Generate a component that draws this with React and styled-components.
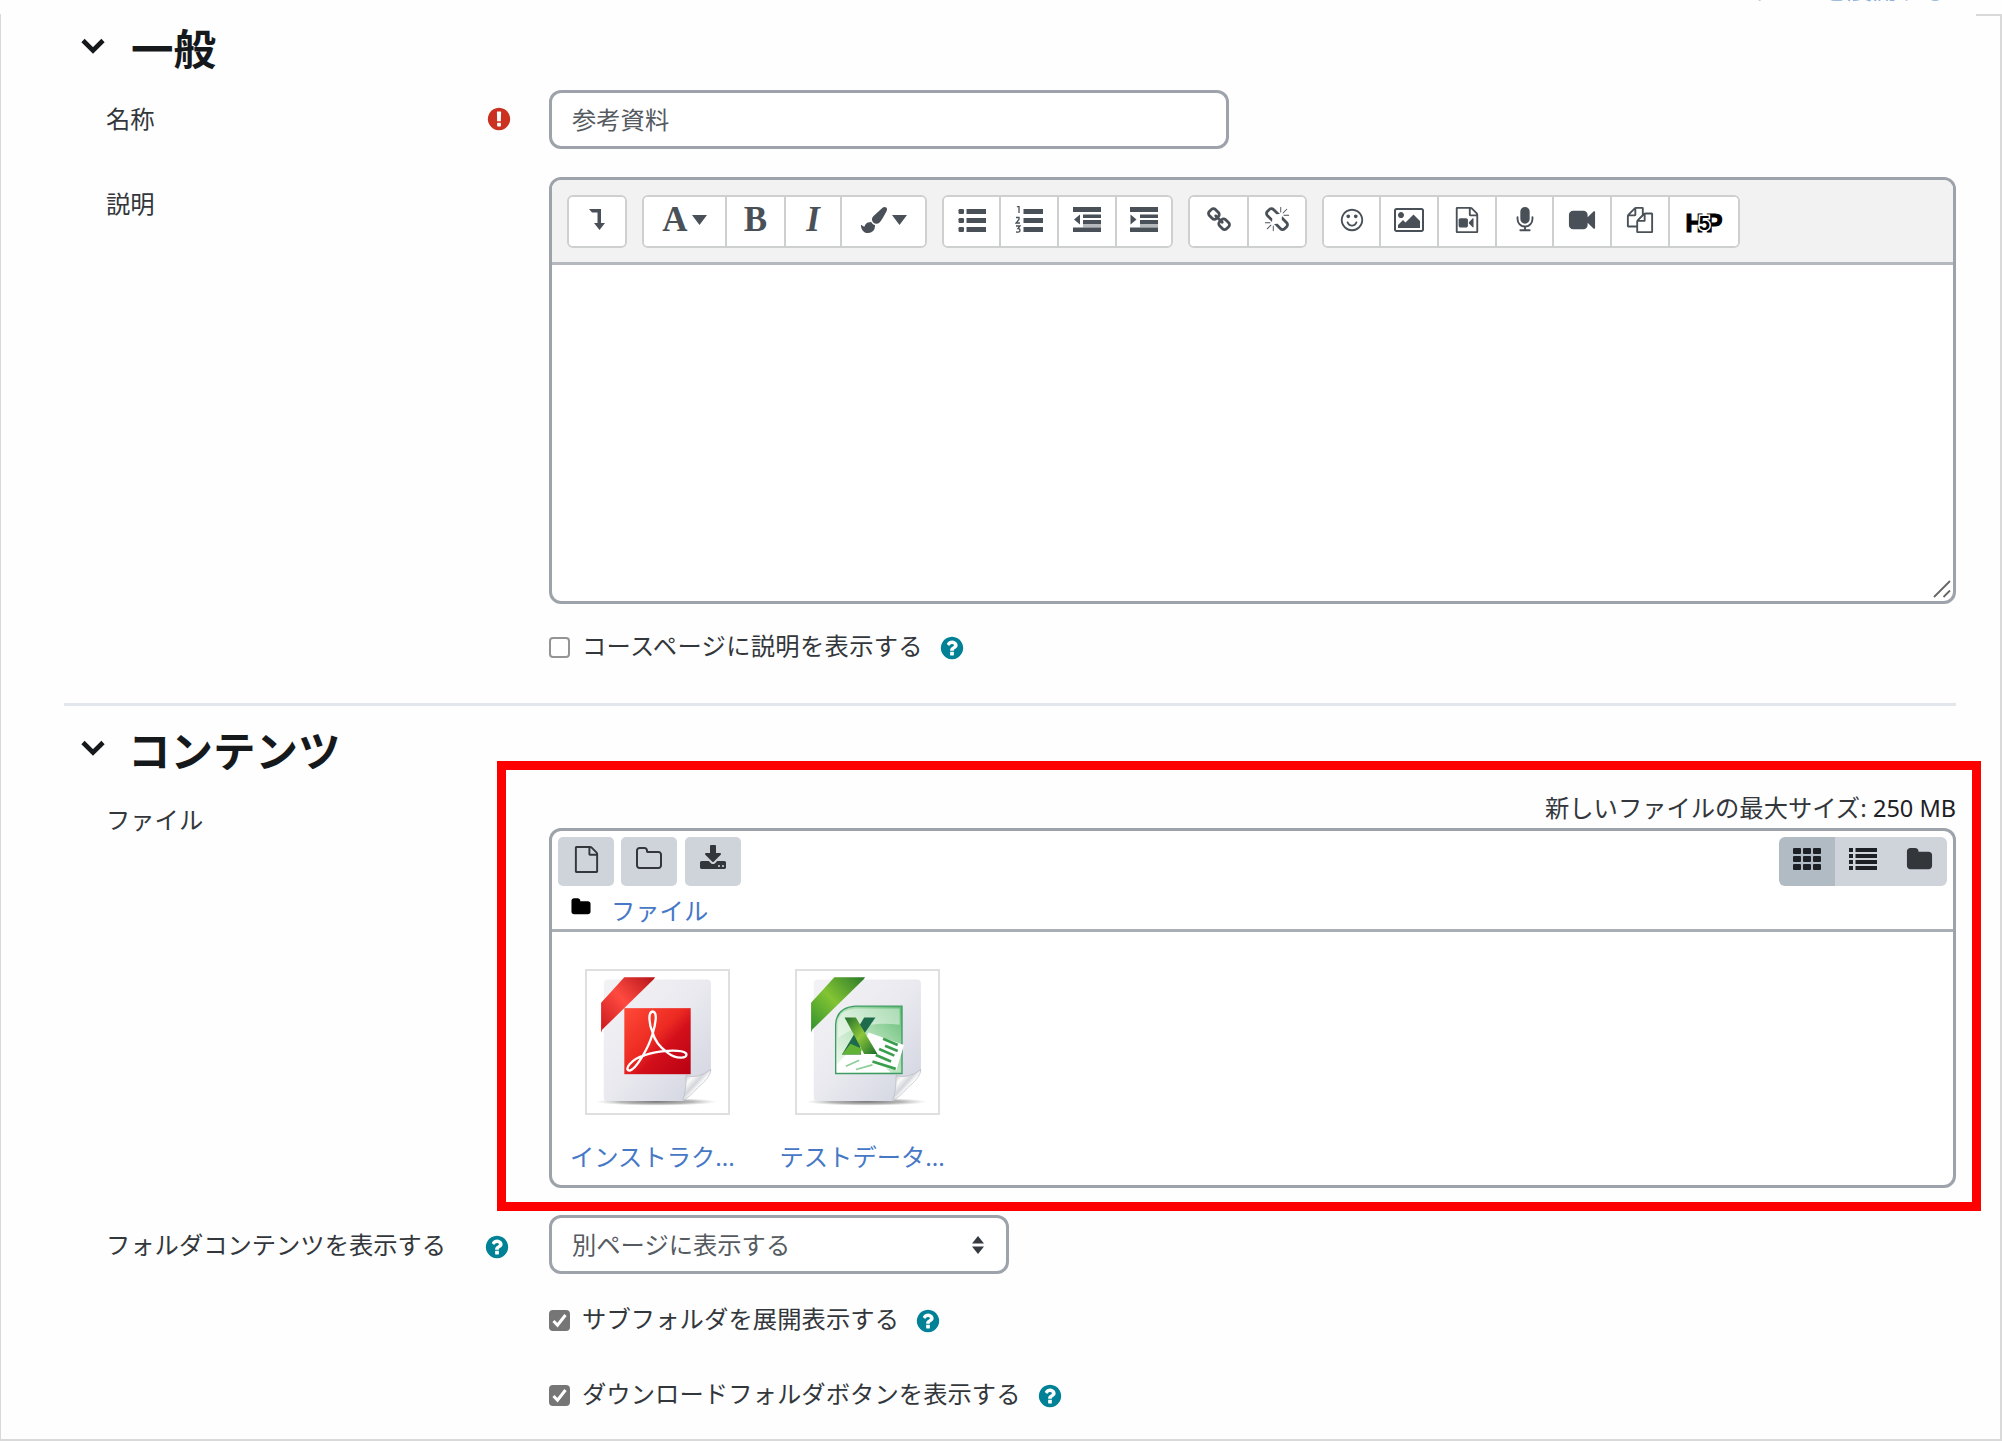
import React from 'react';
import styled, { createGlobalStyle, css } from 'styled-components';

const GlobalStyle = createGlobalStyle`
  *, *::before, *::after { box-sizing: border-box; }
  body { margin: 0; background: #fff; }
  button, input { font: inherit; color: inherit; }
`;

const line = '#9ea3ab';

const Page = styled.div`
  position: relative;
  width: 2002px;
  height: 1441px;
  overflow: hidden;
  background: #fefefe;
  color: #33373b;
  font-family: 'Noto Sans', 'Noto Sans CJK JP', sans-serif;
  font-size: 24.3px;
  font-weight: 400;
  line-height: 36px;
`;

const TopStrip = styled.div`
  height: 14px;
  display: flex;
  justify-content: flex-end;
  padding-right: 55px;
`;

const ExpandAll = styled.a`
  height: 2px;
  overflow: hidden;
  color: #8fb0dc;
  display: flex;
  align-items: flex-end;
  white-space: nowrap;
  font-size: 25px;

  span { line-height: 26px; }
`;

const Frame = styled.main`
  height: 1427px;
  border: solid #d9d9d9;
  border-width: 0 2px 2px 1px;
`;

const CornerLine = styled.div`
  width: 24px;
  height: 2px;
  margin-left: auto;
  background: #d9d9d9;
`;

const Heading = styled.h3`
  margin: 0;
  height: 66px;
  padding-left: 80px;
  display: flex;
  align-items: center;
  gap: ${p => p.$gap}px;
  color: #16191c;
  font-size: 42.5px;
  font-weight: 700;
  line-height: 66px;

  svg { width: 24px; height: 17px; margin-top: -6px; flex: none; }
`;

const Row = styled.div`
  display: grid;
  grid-template-columns: 443px 1407px;
  margin-left: 105px;
  margin-top: ${p => p.$gap}px;
`;

const Label = styled.div`
  display: flex;
  justify-content: space-between;
  align-items: center;
  height: 36px;
  margin-top: ${p => p.$offset || 0}px;
  padding-right: ${p => p.$right || 38}px;
`;

const field = css`
  border: 3px solid ${line};
  border-radius: 12px;
  background: #fff;
`;

const TextField = styled.input`
  ${field}
  width: 680px;
  height: 59px;
  padding: 0 20px 2px;
  color: #555b61;
  outline: none;
`;

const SelectBox = styled.div`
  ${field}
  width: 460px;
  height: 59px;
  padding: 0 20px;
  display: flex;
  align-items: center;
  justify-content: space-between;
  color: #555b61;

  svg { width: 12px; height: 18px; margin-right: 2px; }
`;

const Editor = styled.div`
  ${field}
  height: 427px;
  display: flex;
  flex-direction: column;
  overflow: hidden;
`;

const Toolbar = styled.div`
  height: 85px;
  padding: 15px 0 0 15px;
  display: flex;
  gap: 15px;
  background: #f2f2f2;
  border-bottom: 3px solid #b4b7be;
`;

const Group = styled.div`
  height: 53px;
  display: flex;
  border: 2px solid #cecfcf;
  border-radius: 6px;
  background: #fff;
  overflow: hidden;
`;

const Tool = styled.button`
  width: ${p => p.$w}px;
  height: 100%;
  padding: 0 0 4px;
  border: 0;
  background: #fff;
  color: #495057;
  display: flex;
  align-items: center;
  justify-content: center;
  gap: 4px;

  & + & { border-left: 2px solid #cecfcf; }
`;

const Letter = styled.span`
  font-family: 'Liberation Serif', serif;
  font-size: 35px;
  line-height: 34px;
  font-weight: 700;
  font-style: ${p => (p.$italic ? 'italic' : 'normal')};
`;

const H5PMark = styled.span`
  display: flex;
  align-items: center;
  font-family: 'Liberation Sans', sans-serif;
  font-size: 25px;
  line-height: 24px;
  font-weight: 700;
  color: #000;
  padding: 7px 0 0;

  b { -webkit-text-stroke: 1.2px #000; }

  small {
    position: relative;
    z-index: 1;
    font-size: 20px;
    margin: 0 -4px 0 -5px;
    -webkit-text-stroke: 3px #fff;
    paint-order: stroke fill;
  }
`;

const TextArea = styled.div`
  flex: 1;
  display: flex;
  align-items: flex-end;
  justify-content: flex-end;
  padding: 0 2px 3px;
`;

const CheckRow = styled.label`
  display: flex;
  align-items: center;
  height: 36px;
  margin: ${p => p.$gap}px 0 0 548px;
  letter-spacing: ${p => p.$spacing}px;
`;

const Box = styled.span`
  width: 21px;
  height: 21px;
  margin: 2px 12px 0 0;
  border-radius: 4px;
  border: 2px solid ${p => (p.$on ? '#767676' : '#949494')};
  background: ${p => (p.$on ? '#767676' : '#fff')};
  display: grid;
  place-items: center;
`;

const Help = styled.span`
  display: flex;
  margin: 4px 0 0 ${p => p.$ml || 0}px;
  color: #008196;
`;

const Required = styled.span`
  display: flex;
  color: #ca3120;
`;

const Divider = styled.hr`
  width: 1892px;
  height: 3px;
  margin: 39px 0 12px 63px;
  border: 0;
  background: #e3e6ea;
`;

const MaxSize = styled.div`
  height: 36px;
  margin-bottom: 2px;
  text-align: right;
  white-space: nowrap;
`;

const Latin = styled.span`
  font-size: 23.5px;
  color: #1d2125;
`;

const Manager = styled.div`
  ${field}
  height: 360px;
`;

const ManagerBar = styled.div`
  height: 101px;
  padding: 6px 6px 0;
  border-bottom: 3px solid #a9adb4;
`;

const Between = styled.div`
  display: flex;
  justify-content: space-between;
`;

const Actions = styled.div`
  display: flex;
  gap: 7.3px;
`;

const Views = styled.div`
  display: flex;
  border-radius: 6px;
  overflow: hidden;
`;

const GreyButton = styled.button`
  width: 56px;
  height: 49px;
  padding: 0 0 5px;
  border: 0;
  border-radius: ${p => (p.$flat ? 0 : 5)}px;
  background: ${p => (p.$active ? '#b1bbc4' : '#ced4da')};
  display: flex;
  align-items: center;
  justify-content: center;
`;

const Crumb = styled.div`
  display: flex;
  align-items: center;
  gap: 19px;
  height: 36px;
  margin-top: 7px;
  padding-left: 12px;
  color: #000;

  svg { margin-top: -8px; }
`;

const FileLink = styled.a`
  color: #4678c6;
  white-space: nowrap;
`;

const Files = styled.div`
  display: flex;
  gap: 26px;
  padding: 37px 0 0 18px;
`;

const FileCard = styled.figure`
  width: 183.5px;
  margin: 0;
`;

const Thumb = styled.div`
  width: 145px;
  height: 146px;
  margin-left: 15px;
  border: 2px solid #dddfe1;
  display: flex;

  svg { width: 143px; height: 145px; margin: -1px; flex: none; }
`;

const Caption = styled.figcaption`
  margin-top: 24px;
  height: 36px;
`;

const Highlight = styled.div`
  position: absolute;
  left: 497px;
  top: 761px;
  width: 1484px;
  height: 450px;
  border: 9px solid #f00;
  pointer-events: none;
`;

const PATHS = {
  question: 'M1024 1376v-192q0-14-9-23t-23-9h-192q-14 0-23 9t-9 23v192q0 14 9 23t23 9h192q14 0 23-9t9-23zm256-672q0-88-55.5-163t-138.5-116-170-41q-243 0-371 213-15 24 8 42l132 100q7 6 19 6 16 0 25-12 53-68 86-92 34-24 86-24 48 0 85.5 26t37.5 59q0 38-20 61t-68 45q-63 28-115.5 86.5t-52.5 125.5v36q0 14 9 23t23 9h192q14 0 23-9t9-23q0-19 21.5-49.5t54.5-49.5q32-18 49-28.5t46-35 44.5-48 28-60.5 12.5-81zm384 192q0 209-103 385.5t-279.5 279.5-385.5 103-385.5-103-279.5-279.5-103-385.5 103-385.5 279.5-279.5 385.5-103 385.5 103 279.5 279.5 103 385.5z',
  exclamation: 'M896 128q209 0 385.5 103t279.5 279.5 103 385.5-103 385.5-279.5 279.5-385.5 103-385.5-103-279.5-279.5-103-385.5 103-385.5 279.5-279.5 385.5-103zm128 1247v-190q0-14-9-23.5t-22-9.5h-192q-13 0-23 10t-10 23v190q0 13 10 23t23 10h192q13 0 22-9.5t9-23.5zm-2-344l18-621q0-12-10-18-10-8-24-8h-220q-14 0-24 8-10 6-10 18l17 621q0 10 10 17.5t24 7.5h185q14 0 23.5-7.5t10.5-17.5z',
  brush: 'M1615 0q70 0 122.5 46.5t52.5 116.5q0 63-45 151-332 629-465 752-97 91-218 91-126 0-216.5-92.5t-90.5-219.5q0-128 92-212l638-579q59-54 130-54zm-909 1034q39 76 106.5 130t150.5 76l1 71q4 213-129.5 347t-348.5 134q-123 0-218-46.5t-152.5-127.5-86.5-183-29-220q7 5 41 30t62 44.5 59 36.5 46 17q41 0 55-37 25-66 57.5-112.5t69.5-76 88-47.5 103-25.5 125-10.5z',
  link: 'M1520 1216q0-40-28-68l-208-208q-28-28-68-28-42 0-72 32 3 3 19 18.5t21.5 21.5 15 19 13 25.5 3.5 27.5q0 40-28 68t-68 28q-15 0-27.5-3.5t-25.5-13-19-15-21.5-21.5-18.5-19q-33 31-33 73 0 40 28 68l206 207q27 27 68 27 40 0 68-26l147-146q28-28 28-67zm-703-705q0-40-28-68l-206-207q-28-28-68-28-39 0-68 27l-147 146q-28 28-28 67 0 40 28 68l208 208q27 27 68 27 42 0 72-31-3-3-19-18.5t-21.5-21.5-15-19-13-25.5-3.5-27.5q0-40 28-68t68-28q15 0 27.5 3.5t25.5 13 19 15 21.5 21.5 18.5 19q33-31 33-73zm895 705q0 120-85 203l-147 146q-83 83-203 83-121 0-204-85l-206-207q-83-83-83-203 0-123 88-209l-88-88q-86 88-208 88-120 0-204-84l-208-208q-84-84-84-204t85-203l147-146q83-83 203-83 121 0 204 85l206 207q83 83 83 203 0 123-88 209l88 88q86-88 208-88 120 0 204 84l208 208q84 84 84 204z',
  unlink: 'M503 1271l-256 256q-10 9-23 9-12 0-23-9-9-10-9-23t9-23l256-256q10-9 23-9t23 9q9 10 9 23t-9 23zm169 41v320q0 14-9 23t-23 9-23-9-9-23v-320q0-14 9-23t23-9 23 9 9 23zm-224-224q0 14-9 23t-23 9h-320q-14 0-23-9t-9-23 9-23 23-9h320q14 0 23 9t9 23zm1264 128q0 120-85 203l-147 146q-83 83-203 83-121 0-204-85l-334-335q-21-21-42-56l239-18 273 274q28 28 68 27.5t68-27.5l147-146q28-28 28-67 0-40-28-68l-274-275 18-239q35 21 56 42l336 336q84 86 84 204zm-617-724l-239 18-273-274q-28-28-68-28-39 0-68 27l-147 146q-28 28-28 67 0 40 28 68l274 274-18 240q-35-21-56-42l-336-336q-84-86-84-204 0-120 85-203l147-146q83-83 203-83 121 0 204 85l334 335q21 21 42 56zm633 84q0 14-9 23t-23 9h-320q-14 0-23-9t-9-23 9-23 23-9h320q14 0 23 9t9 23zm-544-544v320q0 14-9 23t-23 9-23-9-9-23v-320q0-14 9-23t23-9 23 9 9 23zm407 151l-256 256q-11 9-23 9t-23-9q-9-10-9-23t9-23l256-256q10-9 23-9t23 9q9 10 9 23t-9 23z',
  smile: 'M1262 1075q-37 121-138 195t-228 74-228-74-138-195q-8-25 4-48.5t38-31.5q25-8 48.5 4t31.5 38q25 80 92.5 129.5t151.5 49.5 151.5-49.5 92.5-129.5q8-26 32-38t49-4 37 31.5 4 48.5zm-494-435q0 53-37.5 90.5t-90.5 37.5-90.5-37.5-37.5-90.5 37.5-90.5 90.5-37.5 90.5 37.5 37.5 90.5zm512 0q0 53-37.5 90.5t-90.5 37.5-90.5-37.5-37.5-90.5 37.5-90.5 90.5-37.5 90.5 37.5 37.5 90.5zm256 256q0-130-51-248.5t-136.5-204-204-136.5-248.5-51-248.5 51-204 136.5-136.5 204-51 248.5 51 248.5 136.5 204 204 136.5 248.5 51 248.5-51 204-136.5 136.5-204 51-248.5zm128 0q0 209-103 385.5t-279.5 279.5-385.5 103-385.5-103-279.5-279.5-103-385.5 103-385.5 279.5-279.5 385.5-103 385.5 103 279.5 279.5 103 385.5z',
  picture: 'M576 576q0 80-56 136t-136 56-136-56-56-136 56-136 136-56 136 56 56 136zm1024 384v448h-1408v-192l320-320 160 160 512-512zm96-704h-1600q-13 0-22.5 9.5t-9.5 22.5v1216q0 13 9.5 22.5t22.5 9.5h1600q13 0 22.5-9.5t9.5-22.5v-1216q0-13-9.5-22.5t-22.5-9.5zm160 32v1216q0 66-47 113t-113 47h-1600q-66 0-113-47t-47-113v-1216q0-66 47-113t113-47h1600q66 0 113 47t47 113z',
  file: 'M1596 380q28 28 48 76t20 88v1152q0 40-28 68t-68 28h-1344q-40 0-68-28t-28-68v-1600q0-40 28-68t68-28h896q40 0 88 20t76 48zm-444-244v376h376q-10-29-22-41l-313-313q-12-12-41-22zm384 1528v-1024h-416q-40 0-68-28t-28-68v-416h-768v1536h1280z',
  fileCamera: 'M832 768q52 0 90 38t38 90v384q0 52-38 90t-90 38h-384q-52 0-90-38t-38-90v-384q0-52 38-90t90-38h384zm492 2q20 8 20 30v576q0 22-20 30-8 2-12 2-14 0-23-9l-265-266v-90l265-266q9-9 23-9 4 0 12 2z',
  mic: 'M1472 704v128q0 221-147.5 384.5t-364.5 187.5v132h256q26 0 45 19t19 45-19 45-45 19h-640q-26 0-45-19t-19-45 19-45 45-19h256v-132q-217-24-364.5-187.5t-147.5-384.5v-128q0-26 19-45t45-19 45 19 19 45v128q0 185 131.5 316.5t316.5 131.5 316.5-131.5 131.5-316.5v-128q0-26 19-45t45-19 45 19 19 45zm-256-384v512q0 132-94 226t-226 94-226-94-94-226v-512q0-132 94-226t226-94 226 94 94 226z',
  camera: 'M1792 352v1088q0 42-39 59-13 5-25 5-27 0-45-19l-403-403v166q0 119-84.5 203.5t-203.5 84.5h-704q-119 0-203.5-84.5t-84.5-203.5v-704q0-119 84.5-203.5t203.5-84.5h704q119 0 203.5 84.5t84.5 203.5v165l403-402q18-19 45-19 12 0 25 5 39 17 39 59z',
  files: 'M1696 384q40 0 68 28t28 68v1216q0 40-28 68t-68 28h-960q-40 0-68-28t-28-68v-288h-544q-40 0-68-28t-28-68v-672q0-40 20-88t48-76l408-408q28-28 76-48t88-20h416q40 0 68 28t28 68v328q68-40 128-40h416zm-544 213l-299 299h299v-299zm-640-384l-299 299h299v-299zm196 647l316-316v-416h-384v416q0 40-28 68t-68 28h-416v640h512v-256q0-40 20-88t48-76zm956 804v-1152h-384v416q0 40-28 68t-68 28h-416v640h896z',
  folder: 'M1728 608v704q0 92-66 158t-158 66h-1216q-92 0-158-66t-66-158v-960q0-92 66-158t158-66h320q92 0 158 66t66 158v32h672q92 0 158 66t66 158z',
  folderOpen: 'M1600 1312v-704q0-40-28-68t-68-28h-704q-40 0-68-28t-28-68v-64q0-40-28-68t-68-28h-320q-40 0-68 28t-28 68v960q0 40 28 68t68 28h1216q40 0 68-28t28-68zm128-704v704q0 92-66 158t-158 66h-1216q-92 0-158-66t-66-158v-960q0-92 66-158t158-66h320q92 0 158 66t66 158v32h672q92 0 158 66t66 158z',
  download: 'M1344 1344q0-26-19-45t-45-19-45 19-19 45 19 45 45 19 45-19 19-45zm256 0q0-26-19-45t-45-19-45 19-19 45 19 45 45 19 45-19 19-45zm128-224v320q0 40-28 68t-68 28h-1472q-40 0-68-28t-28-68v-320q0-40 28-68t68-28h465l135 136q58 56 136 56t136-56l136-136h464q40 0 68 28t28 68zm-325-569q17 41-14 70l-448 448q-18 19-45 19t-45-19l-448-448q-31-29-14-70 17-39 59-39h256v-448q0-26 19-45t45-19h256q26 0 45 19t19 45v448h256q42 0 59 39z',
};

const Icon = ({ name, extra, size = 28 }) => (
  <svg width={size} height={size} viewBox="-64 0 1920 1792" fill="currentColor">
    <path d={PATHS[name]} />
    {extra && <path d={PATHS[extra]} />}
  </svg>
);

const Caret = () => (
  <svg width="15" height="10" viewBox="0 0 15 10" fill="currentColor"><path d="M0 0h15L7.5 10z" /></svg>
);

const Chevron = () => (
  <svg viewBox="0 0 24 17" fill="none" stroke="currentColor" strokeWidth="4.6"><path d="M2 2.500L12 12.500 22 2.500" /></svg>
);

const LevelDown = () => (
  <svg width="16" height="23" viewBox="0 0 16 23" fill="currentColor"><path d="M0 1h12v14h4l-5.500 7L5 15h3.500V4.500H3z" /></svg>
);

const Bullets = ({ ordered }) => (
  <svg width="28" height="28" viewBox="0 0 28 28" fill="currentColor">
    {[3, 12, 21].map(y => <rect key={y} x="8.500" y={y} width="19.500" height="5" />)}
    {ordered
      ? <path d="M2 1l2-1v7M1 11.500h3v2L1 17h4M1 20h4l-2 2.500q2 0 2 2t-4 1.500" fill="none" stroke="currentColor" strokeWidth="1.300" />
      : [3, 12, 21].map(y => <rect key={y} x="0.500" y={y} width="5.500" height="5" rx="1.300" />)}
  </svg>
);

const Dent = ({ inward }) => (
  <svg width="28" height="28" viewBox="0 0 28 28" fill="currentColor">
    <path d="M0 1h28v5H0zM10 8.500h18v3.500H10zM10 14h18v4H10zM0 21.500h28v4.500H0z" />
    <path d="M10 18h18v3.500H10z" opacity="0.400" />
    <path d={inward ? 'M0.500 8.500v10l6-5z' : 'M7 8.500v10l-6-5z'} />
  </svg>
);

const GridIcon = () => (
  <svg width="28" height="22" viewBox="0 0 28 22" fill="#1d2125">
    {[0, 8, 16].map(y => [0, 10, 20].map(x => <rect key={`${x}-${y}`} x={x} y={y} width="8" height="6" rx="1" />))}
  </svg>
);

const ListIcon = () => (
  <svg width="28" height="22" viewBox="0 0 28 22" fill="#1d2125">
    {[0, 6, 12, 18].map(y => <g key={y}><rect y={y} width="4" height="4" /><rect x="6.500" y={y} width="21.500" height="4" /></g>)}
  </svg>
);

const Tick = () => (
  <svg width="17" height="17" viewBox="0 0 17 17" fill="none" stroke="#fff" strokeWidth="3"><path d="M2.500 9l4 4.200L14.500 3" /></svg>
);

const Grip = () => (
  <svg width="18" height="18" viewBox="0 0 18 18" stroke="#666" strokeWidth="1.800"><path d="M1 17L17 1M10.500 17L17 10.500" /></svg>
);

const Sheet = ({ id, from, mid, to, children }) => (
  <svg viewBox="0 0 430 437">
    <defs>
      <linearGradient id={`${id}-page`} x1="0" y1="0" x2="1" y2="1">
        <stop offset="0" stopColor="#f3f3f6" /><stop offset="0.500" stopColor="#e9e9ef" /><stop offset="1" stopColor="#cfd2df" />
      </linearGradient>
      <linearGradient id={`${id}-ribbon`} x1="0" y1="1" x2="1" y2="0">
        <stop offset="0" stopColor={from} /><stop offset="0.500" stopColor={mid} /><stop offset="1" stopColor={to} />
      </linearGradient>
      <linearGradient id={`${id}-curl`} x1="0" y1="0" x2="1" y2="1">
        <stop offset="0.100" stopColor="#b9bac2" /><stop offset="0.300" stopColor="#fafafa" /><stop offset="0.450" stopColor="#d4d5da" /><stop offset="0.560" stopColor="#fff" />
      </linearGradient>
      <radialGradient id={`${id}-shade`}>
        <stop offset="0" stopColor="#777" /><stop offset="0.600" stopColor="#999" stopOpacity="0.700" /><stop offset="1" stopColor="#bbb" stopOpacity="0" />
      </radialGradient>
    </defs>
    <ellipse cx="212" cy="397" rx="184" ry="12" fill={`url(#${id}-shade)`} />
    <path d="M65 29H364q12 0 12 12V304L293 395H65q-12 0-12-12V41q0-12 12-12z" fill={`url(#${id}-page)`} />
    <path d="M376 300Q335 330 301 318Q302 365 291 393Q310 385 336 355Q376 322 376 300z" fill={`url(#${id}-curl)`} stroke="#b5b6bd" strokeWidth="2" />
    <path d="M115 22H208L203 29L48 180L45 189V99z" fill={`url(#${id}-ribbon)`} />
    {children}
  </svg>
);

const PdfIcon = () => (
  <Sheet id="pdf" from="#c8171c" mid="#ff4a40" to="#b5141a">
    <defs>
      <linearGradient id="pdf-tile" x1="0" y1="0" x2="1" y2="1">
        <stop offset="0" stopColor="#ff4a37" /><stop offset="0.450" stopColor="#ec2a22" /><stop offset="0.600" stopColor="#d3101b" /><stop offset="1" stopColor="#b80012" />
      </linearGradient>
    </defs>
    <rect x="115" y="115" width="200" height="199" fill="url(#pdf-tile)" />
    <path d="M200 188C190 165 185 126 201 125C216 126 209 165 200 193C188 235 150 300 131 303C112 302 135 268 176 257C215 242 285 238 301 251C309 269 270 269 245 249C224 234 207 215 200 188" fill="none" stroke="#fff" strokeWidth="7" />
  </Sheet>
);

const ExcelIcon = () => (
  <Sheet id="xls" from="#2d8f2c" mid="#83c433" to="#2a7a2a">
    <defs>
      <linearGradient id="xls-tile" x1="0" y1="1" x2="1" y2="0">
        <stop offset="0" stopColor="#f6fbf6" /><stop offset="0.500" stopColor="#b9e3bd" /><stop offset="1" stopColor="#5fbb72" />
      </linearGradient>
      <linearGradient id="xls-stroke" x1="0" y1="0" x2="1" y2="1">
        <stop offset="0" stopColor="#1e6b2c" /><stop offset="0.500" stopColor="#8cc63a" /><stop offset="1" stopColor="#176b2c" />
      </linearGradient>
    </defs>
    <path d="M119 312V164Q122 113 178 109H319V312z" fill="url(#xls-tile)" stroke="#3c9c62" strokeWidth="4" />
    <path d="M126 160Q130 119 178 116H312V165Q200 150 126 205z" fill="#fff" opacity="0.450" />
    <path d="M123 308V285L150 255L195 237L218 188L325 226L302 302L270 296L285 308z" fill="#fff" />
    <path d="M262 207l44 19M268 228l38 16M250 238l46 20M240 256l46 20M230 276l70 22" stroke="#3a9f4c" strokeWidth="8" />
    <path d="M150 290l40-18M180 300l50-14" stroke="#8ccf95" strokeWidth="5" />
    <path d="M205 143H239L190 214L196 255H138z" fill="#1d6b4b" />
    <path d="M138 255L164 222L198 237L194 255z" fill="#62b236" />
    <path d="M146 143H180L245 253H205z" fill="url(#xls-stroke)" />
  </Sheet>
);

const HelpIcon = ({ ml }) => <Help $ml={ml}><Icon name="question" size={28} /></Help>;

const Check = ({ label, on, gap, spacing }) => (
  <CheckRow $gap={gap} $spacing={spacing}>
    <Box $on={on}>{on && <Tick />}</Box>
    {label}
    <HelpIcon ml={15} />
  </CheckRow>
);

export default function App() {
  return (
    <Page>
      <GlobalStyle />
      <TopStrip><ExpandAll><span>すべてを展開する</span></ExpandAll></TopStrip>
      <Frame>
        <CornerLine />
        <Heading $gap={26}><Chevron />一般</Heading>
        <Row $gap={8}>
          <Label $offset={11} $right={36}>
            名称
            <Required><Icon name="exclamation" size={28} /></Required>
          </Label>
          <TextField defaultValue="参考資料" />
        </Row>
        <Row $gap={28}>
          <Label $offset={9}>説明</Label>
          <Editor>
            <Toolbar>
              <Group><Tool $w={56}><LevelDown /></Tool></Group>
              <Group>
                <Tool $w={81}><Letter>A</Letter><Caret /></Tool>
                <Tool $w={59}><Letter>B</Letter></Tool>
                <Tool $w={56}><Letter $italic>I</Letter></Tool>
                <Tool $w={85}><Icon name="brush" size={28} /><Caret /></Tool>
              </Group>
              <Group>
                <Tool $w={55}><Bullets /></Tool>
                <Tool $w={58}><Bullets ordered /></Tool>
                <Tool $w={58}><Dent /></Tool>
                <Tool $w={56}><Dent inward /></Tool>
              </Group>
              <Group>
                <Tool $w={57}><Icon name="link" /></Tool>
                <Tool $w={58}><Icon name="unlink" /></Tool>
              </Group>
              <Group>
                <Tool $w={55}><Icon name="smile" /></Tool>
                <Tool $w={58}><Icon name="picture" size={30} /></Tool>
                <Tool $w={58}><Icon name="file" extra="fileCamera" /></Tool>
                <Tool $w={57}><Icon name="mic" /></Tool>
                <Tool $w={58}><Icon name="camera" /></Tool>
                <Tool $w={58}><Icon name="files" /></Tool>
                <Tool $w={70}><H5PMark><b>H</b><small>5</small><b>P</b></H5PMark></Tool>
              </Group>
            </Toolbar>
            <TextArea><Grip /></TextArea>
          </Editor>
        </Row>
        <Check gap={24} spacing={0.3} label="コースページに説明を表示する" />
        <Divider />
        <Heading $gap={23}><Chevron />コンテンツ</Heading>
        <Row $gap={6}>
          <Label $offset={12}>ファイル</Label>
          <div>
            <MaxSize>新しいファイルの最大サイズ: <Latin>250 MB</Latin></MaxSize>
            <Manager>
              <ManagerBar>
                <Between>
                  <Actions>
                    <GreyButton><Icon name="file" size={29} /></GreyButton>
                    <GreyButton><Icon name="folderOpen" size={30} /></GreyButton>
                    <GreyButton><Icon name="download" size={30} /></GreyButton>
                  </Actions>
                  <Views>
                    <GreyButton $flat $active><GridIcon /></GreyButton>
                    <GreyButton $flat><ListIcon /></GreyButton>
                    <GreyButton $flat><Icon name="folder" size={29} /></GreyButton>
                  </Views>
                </Between>
                <Crumb><Icon name="folder" size={22} /><FileLink>ファイル</FileLink></Crumb>
              </ManagerBar>
              <Files>
                <FileCard>
                  <Thumb><PdfIcon /></Thumb>
                  <Caption><FileLink>インストラク...</FileLink></Caption>
                </FileCard>
                <FileCard>
                  <Thumb><ExcelIcon /></Thumb>
                  <Caption><FileLink>テストデータ...</FileLink></Caption>
                </FileCard>
              </Files>
            </Manager>
          </div>
        </Row>
        <Row $gap={27}>
          <Label $offset={12}>フォルダコンテンツを表示する<HelpIcon /></Label>
          <SelectBox>
            別ページに表示する
            <svg viewBox="0 0 12 18" fill="#343a40"><path d="M0 7.500h12L6 0zM0 10.500h12L6 18z" /></svg>
          </SelectBox>
        </Row>
        <Check on gap={27} spacing={0.1} label="サブフォルダを展開表示する" />
        <Check on gap={39} spacing={0.07} label="ダウンロードフォルダボタンを表示する" />
      </Frame>
      <Highlight />
    </Page>
  );
}
